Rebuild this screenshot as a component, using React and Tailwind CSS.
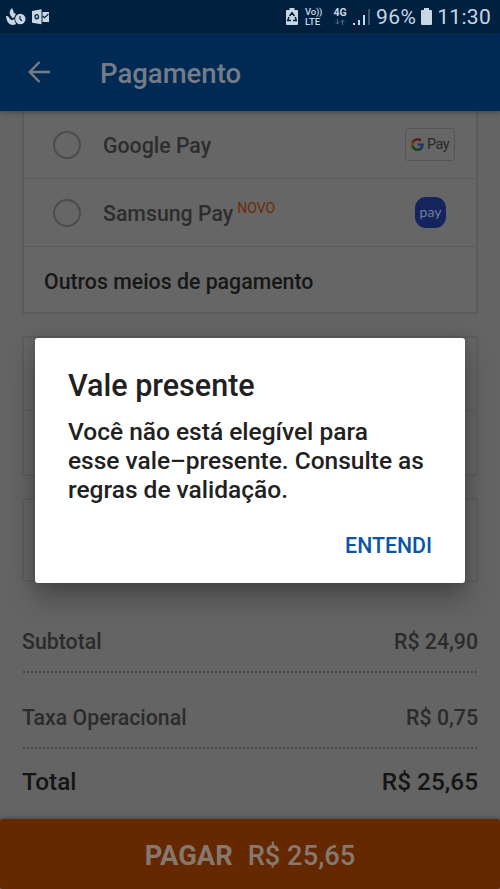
const StatusBar = () => (
  <div className="flex h-[33px] shrink-0 items-center bg-[#00203f] pl-1.5 pr-[9px] text-[#c9d6e4]">
    <svg className="h-[18px] w-5" viewBox="0 0 20 18" fill="currentColor">
      <path d="M6 0C3.500 2.500 3 5 4.500 7.500L7 10.500C9.500 8 10.500 6 8.500 4.500L8 6C7.500 3 7 1.500 6 0Z" />
      <path d="M0 8c2.500-.5 3 1.500 4 3 1.200 1.600 3 1.500 4.500-.5L10 16c-4 2.500-9.500 0-10-8Z" />
      <circle cx="14.300" cy="11" r="6" fill="#00203f" />
      <circle cx="14.300" cy="11" r="5.200" />
      <path d="M14 8v3.300l2 1.500" fill="none" stroke="#00203f" strokeWidth="1.100" />
    </svg>
    <svg className="ml-1.5 h-4 w-[17px]" viewBox="0 0 17 16" fill="currentColor">
      <path d="M0 2 9.500.300v15L0 13.700Z" />
      <path d="M10.500 3H17v10h-6.500Z" />
      <ellipse cx="4.800" cy="7.800" rx="1.700" ry="2.100" fill="none" stroke="#00203f" strokeWidth="1.300" />
      <path d="m10.500 7 2 1.700L16.500 5" fill="none" stroke="#00203f" strokeWidth="1.200" />
    </svg>

    <div className="ml-auto flex items-center">
      <svg className="h-[17px] w-3" viewBox="0 0 12 17" fill="currentColor">
        <path d="M3.500 0h5v2H11q1 0 1 1v13q0 1-1 1H1q-1 0-1-1V3q0-1 1-1h2.500Z" />
        <path d="M3.600 8 6 4.700 8.400 8M9.300 9l1 3.500H7M5 12.500H1.700L3 9" fill="none" stroke="#00203f" strokeWidth="1.500" />
      </svg>
      <div className="ml-[7px] flex w-[18px] flex-col whitespace-nowrap font-medium">
        <span className="text-[9.5px] leading-[10px] tracking-[-0.2px]">Vo))</span>
        <span className="text-[9.5px] leading-[10px]">LTE</span>
      </div>
      <div className="ml-2.5 flex w-[14px] flex-col items-center">
        <span className="text-[10.5px] font-bold leading-[10px]">4G</span>
        <svg className="mt-px h-[6px] w-[10px] opacity-40" viewBox="0 0 10 6" fill="none" stroke="currentColor">
          <path d="M2.500 0v5M.5 3l2 2 2-2M7.500 6V1M5.500 3l2-2 2 2" />
        </svg>
      </div>
      <svg className="ml-1.5 h-[17px] w-[17px]" viewBox="0 0 17 17" fill="currentColor">
        <path d="M0 15h2v2H0zM5 12h2v5H5zM10 7h2v10h-2z" />
        <path d="M15 1h2v16h-2z" opacity=".3" />
      </svg>
      <span className="ml-[6px] text-[21px] leading-6 tracking-[0.4px]">96%</span>
      <svg className="ml-[5px] h-[17px] w-[11px]" viewBox="0 0 11 17" fill="currentColor">
        <path d="M3 0h5v2h2q1 0 1 1v13q0 1-1 1H1q-1 0-1-1V3q0-1 1-1h2Z" />
      </svg>
      <span className="ml-[5px] text-[21px] leading-6 tracking-[0.3px]">11:30</span>
    </div>
  </div>
);

const Header = () => (
  <header className="z-10 flex h-[78px] shrink-0 items-center bg-[#002954] pl-7 text-[#747d87] shadow-[0_2px_4px_rgba(0,0,0,0.25)]">
    <svg className="h-[22px] w-[23px]" viewBox="0 0 23 22" fill="none" stroke="currentColor" strokeWidth="2.500">
      <path d="M22 11H2M11.500 1 1.700 11l9.800 10" />
    </svg>
    <h1 className="ml-[49px] pt-[3px] text-[27.5px] font-medium">Pagamento</h1>
  </header>
);

const GooglePay = () => (
  <div className="flex h-[33px] w-[50px] items-center justify-center gap-[3px] rounded-[3px] border border-[#555]">
    <svg className="h-[13px] w-[13px]" viewBox="0 0 24 24">
      <path fill="#1d3663" d="M23.500 12.300c0-.8-.1-1.600-.2-2.300H12v4.500h6.500c-.3 1.500-1.100 2.700-2.400 3.600v3h3.900c2.200-2.100 3.500-5.200 3.500-8.800Z" />
      <path fill="#154422" d="M12 24c3.200 0 6-1.100 7.900-2.900l-3.800-3c-1.100.7-2.400 1.200-4.100 1.200-3.100 0-5.800-2.100-6.700-5H1.300v3.100C3.300 21.300 7.300 24 12 24Z" />
      <path fill="#654a05" d="M5.300 14.300a7.200 7.200 0 0 1 0-4.600V6.600h-4a12 12 0 0 0 0 10.800l4-3.100Z" />
      <path fill="#5d1b15" d="M12 4.800c1.800 0 3.300.6 4.600 1.800L20 3.200A12 12 0 0 0 1.300 6.600l4 3.100c.9-2.900 3.600-4.900 6.700-4.900Z" />
    </svg>
    <span className="pt-0.5 text-[14.5px] leading-none tracking-[-0.5px] text-[#292929]">Pay</span>
  </div>
);

const SamsungPay = () => (
  <div className="mr-[9px] flex size-[31px] items-center justify-center rounded-[11px] bg-[#14245d] pb-[2px] font-['Lato'] text-[14px] text-[#777d96]">
    pay
  </div>
);

const PaymentOption = ({ name, badge, children }) => (
  <div className="flex h-[68px] items-center border-b border-[#5a5a5a] pl-[29px] pr-[21px]">
    <span className="size-7 rounded-full border-2 border-[#4c4c4c]" />
    <span className="ml-[22px] pt-0.5 text-[21.3px] font-medium text-[#2d2d2d]">{name}</span>
    {badge && <span className="mb-2 ml-1 text-[14px] text-[#6b2c05]">{badge}</span>}
    <div className="ml-auto">{children}</div>
  </div>
);

const SummaryRow = ({ label, value }) => (
  <div className="flex items-center justify-between text-[21.3px] font-medium leading-[30px] text-[#2b2b2b]">
    <span>{label}</span>
    <span>{value}</span>
  </div>
);

const Dots = () => (
  <div className="ml-px h-[2px] bg-[repeating-linear-gradient(90deg,#484848_0_2px,transparent_2px_4px)]" />
);

const Dialog = () => (
  <div className="absolute inset-0 z-20 flex items-start justify-center pt-[338px]">
    <div
      role="dialog"
      className="flex h-[245px] w-[430px] flex-col rounded-[3px] bg-white px-[33px] pt-[30px] text-[#212121] shadow-[0_14px_28px_rgba(0,0,0,0.3),0_0_12px_rgba(0,0,0,0.15)]"
    >
      <h2 className="text-[30.5px] font-medium leading-9">Vale presente</h2>
      <p className="mt-[13px] whitespace-nowrap text-[24.5px] font-medium leading-[29px]">
        Você não está elegível para
        <br />
        esse vale–presente. Consulte as
        <br />
        regras de validação.
      </p>
      <button className="ml-auto mt-[27px] text-[21.3px] font-medium leading-[30px] text-[#0a55a5]">ENTENDI</button>
    </div>
  </div>
);

export default function App() {
  return (
    <div className="relative flex h-[889px] w-[500px] flex-col overflow-hidden bg-[#646464] font-['Roboto',sans-serif]">
      <StatusBar />
      <Header />

      <main className="flex-1 px-[22px]">
        {/* Payment methods */}
        <section className="h-[203px] rounded-b-[2px] border-x-2 border-b-2 border-[#5b5b5b] bg-[#666]">
          <PaymentOption name="Google Pay">
            <GooglePay />
          </PaymentOption>
          <PaymentOption name="Samsung Pay" badge="NOVO">
            <SamsungPay />
          </PaymentOption>
          <div className="flex h-[68px] items-center pl-5 pt-0.5 text-[21.3px] font-medium text-[#171717]">
            Outros meios de pagamento
          </div>
        </section>

        <section className="mt-[22px] h-[140px] rounded-[2px] border-2 border-[#5d5d5d] bg-[#666]">
          <div className="h-[73px] border-b border-[#5d5d5d]" />
        </section>
        <section className="mt-[22px] h-[84px] rounded-[2px] border-2 border-[#5d5d5d] bg-[#666]" />

        {/* Order summary */}
        <section className="pt-[45px]">
          <SummaryRow label="Subtotal" value="R$ 24,90" />
          <div className="pb-[30px] pt-[14px]">
            <Dots />
          </div>
          <SummaryRow label="Taxa Operacional" value="R$ 0,75" />
          <div className="pt-[14px]">
            <Dots />
          </div>
          <div className="mt-[17px] flex justify-between text-[24.4px] font-medium leading-[32px] text-[#151515]">
            <span>Total</span>
            <span>R$ 25,65</span>
          </div>
        </section>
      </main>

      <footer className="flex h-[70px] shrink-0 items-center justify-center gap-[15px] rounded-[3px] bg-[#662800] pt-1 text-[27.3px] text-[#85796f] shadow-[0_-1px_4px_rgba(0,0,0,0.3)]">
        <span className="font-bold">PAGAR</span>
        <span className="font-medium">R$ 25,65</span>
      </footer>

      <Dialog />
    </div>
  );
}
